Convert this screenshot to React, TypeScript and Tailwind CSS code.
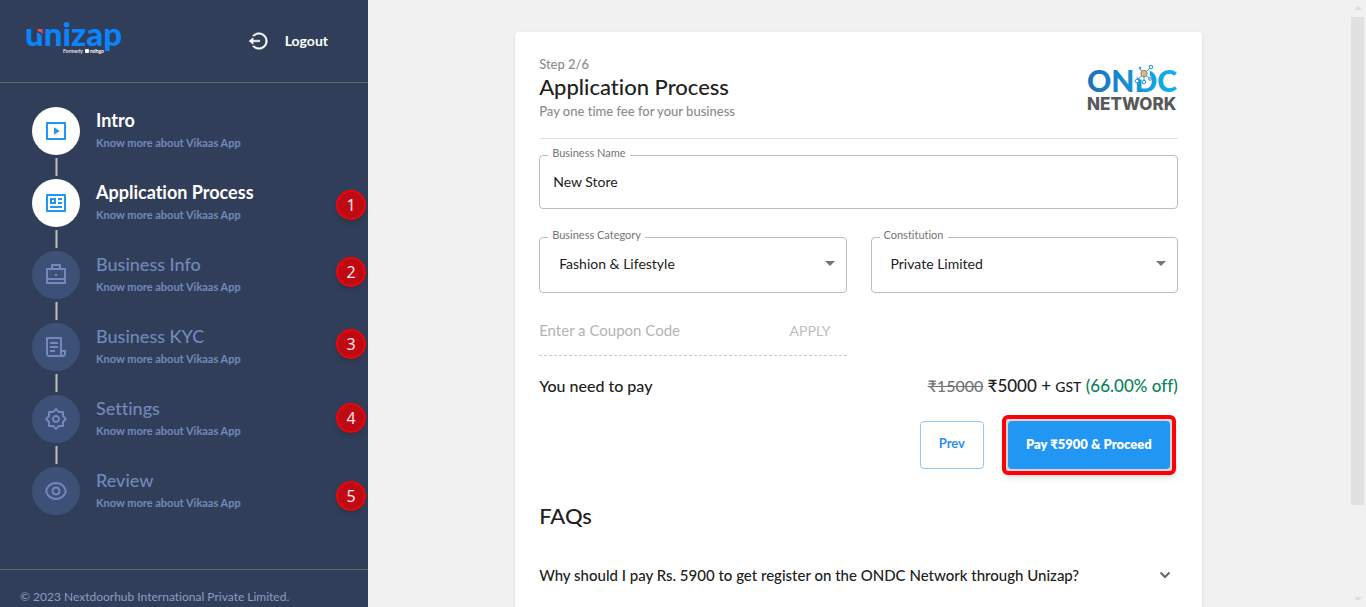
import { Fragment } from "react";
import type { ReactNode } from "react";
import {
  RiEyeLine,
  RiFileList3Line,
  RiLogoutCircleLine,
  RiProfileLine,
  RiSettings2Line,
} from "react-icons/ri";

type Step = { title: string; icon: ReactNode; state: "done" | "current" | "pending" };

const PlayIcon = () => (
  <svg viewBox="0 0 24 24" className="size-6" fill="currentColor" aria-hidden="true">
    <path d="M2 3h20v18H2V3Zm2 2v14h16V5H4Z" />
    <path d="M10 8.3v7.4l5.8-3.7L10 8.3Z" />
  </svg>
);

const BriefcaseIcon = () => (
  <svg viewBox="0 0 24 24" className="size-6" fill="currentColor" aria-hidden="true">
    <path d="M7 5V2a1 1 0 0 1 1-1h8a1 1 0 0 1 1 1v3h4a1 1 0 0 1 1 1v14a1 1 0 0 1-1 1H3a1 1 0 0 1-1-1V6a1 1 0 0 1 1-1h4Zm-3 12v2h16v-2H4Zm0-2h16V7H4v8ZM9 3v2h6V3H9Zm2 8h2v2h-2v-2Z" />
  </svg>
);

const steps: Step[] = [
  { title: "Intro", icon: <PlayIcon />, state: "done" },
  { title: "Application Process", icon: <RiProfileLine className="size-6" />, state: "current" },
  { title: "Business Info", icon: <BriefcaseIcon />, state: "pending" },
  { title: "Business KYC", icon: <RiFileList3Line className="size-6" />, state: "pending" },
  { title: "Settings", icon: <RiSettings2Line className="size-6" />, state: "pending" },
  { title: "Review", icon: <RiEyeLine className="size-6" />, state: "pending" },
];

const markers = [
  { n: 1, top: "top-[190px]" },
  { n: 2, top: "top-[257px]" },
  { n: 3, top: "top-[329px]" },
  { n: 4, top: "top-[403px]" },
  { n: 5, top: "top-[481px]" },
];

function UnizapLogo() {
  return (
    <svg viewBox="0 0 100 32" className="h-8 w-[100px] overflow-visible" role="img" aria-label="Unizap">
      <text x="1" y="21" fill="#0a84ff" fontFamily="Lato, sans-serif" fontWeight="900" fontSize="33">
        unizap
      </text>
      <path d="M12 3h8v3l-2 5-3-3-3-1Z" fill="#313e59" />
      <path d="M13.500 4h5v5.500l-2-2.500-3-1Z" fill="#e0525c" />
      <text x="39" y="28" fill="#e5e7eb" fontFamily="Lato, sans-serif" fontWeight="700" fontSize="5">
        Formerly
      </text>
      <rect x="61" y="24" width="4" height="4" rx="1" fill="#fff" />
      <text x="66" y="28" fill="#fff" fontFamily="Lato, sans-serif" fontWeight="700" fontSize="5">
        ndhgo
      </text>
    </svg>
  );
}

function OndcLogo() {
  return (
    <svg viewBox="0 0 92 48" className="h-12 w-[92px] overflow-visible" role="img" aria-label="ONDC Network">
      <defs>
        <linearGradient id="ondc" gradientUnits="userSpaceOnUse" x1="0" x2="92" y1="0" y2="0">
          <stop offset="0" stopColor="#1d70b8" />
          <stop offset="1" stopColor="#0db4f3" />
        </linearGradient>
      </defs>
      <text x="1" y="28" fill="url(#ondc)" fontFamily="Lato, sans-serif" fontWeight="900" fontSize="30">
        ONDC
      </text>
      <circle cx="57" cy="9" r="7" fill="#fff" />
      <g stroke="#2a93d5" strokeWidth="1" fill="#fff">
        <path d="M58 10l6-6M58 10l-7 6M58 10v7M58 10l5 4M58 10l-4-5" />
        <circle cx="65" cy="3" r="1.800" />
        <circle cx="51" cy="17" r="1.800" />
        <circle cx="58" cy="18" r="1.800" />
        <circle cx="64" cy="15" r="1.300" />
        <circle cx="54" cy="4" r="1" />
      </g>
      <circle cx="58" cy="9.500" r="3.200" fill="#d7b98c" stroke="#7b7468" strokeWidth="0.800" />
      <text x="1" y="46" fill="#58595b" fontFamily="Inter, sans-serif" fontWeight="800" fontSize="17">
        NETWORK
      </text>
    </svg>
  );
}

function SelectField({ id, label, value }: { id: string; label: string; value: string }) {
  return (
    <div className="relative">
      <label htmlFor={id} className="absolute -top-2 left-[9px] bg-white px-1 text-[11px] leading-3 text-[#757575]">
        {label}
      </label>
      <select
        id={id}
        className="block h-14 w-full appearance-none rounded border border-[#bdbdbd] bg-white px-[19px] pb-0.5 text-sm text-[#212121]"
      >
        <option>{value}</option>
      </select>
      <svg viewBox="0 0 10 5" className="pointer-events-none absolute top-6 right-3 h-[5px] w-2.5" aria-hidden="true">
        <path d="M0 0h10L5 5Z" fill="#757575" />
      </svg>
    </div>
  );
}

function Sidebar() {
  return (
    <aside className="relative flex w-[368px] shrink-0 flex-col bg-[#313e59]">
      <header className="flex h-[83px] items-center justify-between border-b border-[#666666] pr-10 pl-6">
        <UnizapLogo />
        <button className="flex items-center gap-4 text-sm font-bold text-white">
          <RiLogoutCircleLine className="size-5" stroke="currentColor" strokeWidth="0.5" />
          Logout
        </button>
      </header>
      <nav className="px-8 pt-6">
        <ol>
          {steps.map((s, i) => (
            <Fragment key={s.title}>
              {i > 0 && (
                <li aria-hidden="true" className="my-[3px] ml-[23px] h-[18px] w-[3px] border-x border-[#7a828f] bg-[#bdbdbd]" />
              )}
              <li className="flex h-12 gap-4">
                <span
                  className={
                    s.state === "pending"
                      ? "flex size-12 shrink-0 items-center justify-center rounded-full bg-[#3d5178] text-[#7289bb]"
                      : "flex size-12 shrink-0 items-center justify-center rounded-full bg-white text-[#2196f3]"
                  }
                >
                  {s.icon}
                </span>
                <a href="#step" className="block">
                  <span
                    className={
                      s.state === "pending"
                        ? "block text-lg leading-[26px] font-medium text-[#7289bb]"
                        : "block text-lg leading-[26px] font-bold text-white"
                    }
                  >
                    {s.title}
                  </span>
                  <span className="block text-[11px] leading-5 font-bold text-[#7289bb]">Know more about Vikaas App</span>
                </a>
              </li>
            </Fragment>
          ))}
        </ol>
      </nav>
      <footer className="mt-auto h-[38px] border-t border-[#666666] px-5 pt-[18px] text-xs leading-[18px] whitespace-nowrap text-[#8b9dc5]">
        © 2023 Nextdoorhub International Private Limited.
      </footer>
      {markers.map((m) => (
        <span
          key={m.n}
          className={`${m.top} absolute right-[2px] flex size-[30px] items-center justify-center rounded-full border-2 border-[#ee0508] bg-[#bd0a14] font-['Noto_Sans'] text-base text-[#ffe4e4] shadow-md`}
        >
          {m.n}
        </span>
      ))}
    </aside>
  );
}

function Scrollbar() {
  return (
    <div aria-hidden="true" className="flex w-[17px] shrink-0 flex-col items-center gap-1 bg-[#f1f1f1] py-1.5">
      <svg viewBox="0 0 8 4" className="h-1 w-2 shrink-0">
        <path d="M0 4h8L4 0Z" fill="#dcdcdc" />
      </svg>
      <div className="mt-[3px] h-[82%] w-[13px] bg-[#e1e1e1]" />
      <svg viewBox="0 0 8 4" className="mt-auto h-1 w-2 shrink-0">
        <path d="M0 0h8L4 4Z" fill="#dcdcdc" />
      </svg>
    </div>
  );
}

export default function App() {
  return (
    <div className="flex h-screen overflow-hidden bg-[#f1f1f1] font-[Lato,sans-serif] text-[#212121] [font-variant-ligatures:none]">
      <Sidebar />
      <main className="min-w-0 flex-1 overflow-hidden pt-8">
        <section className="mx-auto min-h-full w-[70%] rounded bg-white p-6 shadow">
          <header className="flex justify-between border-b border-[#e0e0e0] pb-[18px]">
            <div>
              <p className="text-[13px] leading-4 font-medium text-[#8c8c8c]">Step 2/6</p>
              <h1 className="text-[22px] leading-[30px] font-medium">Application Process</h1>
              <p className="text-[13px] leading-[18px] font-medium text-[#8c8c8c]">Pay one time fee for your business</p>
            </div>
            <div className="pt-2">
              <OndcLogo />
            </div>
          </header>
          <form onSubmit={(e) => e.preventDefault()}>
            <div className="relative mt-4">
              <label htmlFor="name" className="absolute -top-2 left-[9px] bg-white px-1 text-[11px] leading-3 text-[#757575]">
                Business Name
              </label>
              <input
                id="name"
                defaultValue="New Store"
                className="block h-[54px] w-full rounded border border-[#bdbdbd] px-[13px] pb-0.5 text-sm text-[#212121]"
              />
            </div>
            <div className="mt-7 grid grid-cols-2 gap-6">
              <SelectField id="category" label="Business Category" value="Fashion & Lifestyle" />
              <SelectField id="constitution" label="Constitution" value="Private Limited" />
            </div>
            <div className="mt-[14px] grid grid-cols-2 gap-6">
              <div className="flex h-[49px] items-center justify-between border-b border-dashed border-[#cccccc] pr-4 text-sm text-[#bdbdbd]">
                <input
                  aria-label="Coupon code"
                  placeholder="Enter a Coupon Code"
                  className="min-w-0 flex-1 text-[15px] placeholder:text-[#b3b3b3]"
                />
                <button type="button">APPLY</button>
              </div>
            </div>
            <div className="mt-[18px] flex h-6 items-center justify-between">
              <p className="text-base font-medium">You need to pay</p>
              <p className="text-[17px] font-medium">
                <s className="text-base text-[#757575]">₹15000</s> ₹5000 + <span className="text-sm">GST</span>{" "}
                <span className="text-[#0b8457]">(66.00% off)</span>
              </p>
            </div>
            <div className="mt-[17px] flex justify-end gap-[18px] pr-0.5">
              <button type="button" className="my-1.5 h-12 w-16 rounded border border-[#90caf9] pb-0.5 text-[13px] font-bold text-[#2f8eea]">
                Prev
              </button>
              <div className="rounded-md border-4 border-[#fb0007] bg-[#d5d5d5] p-0.5 shadow-md">
                <button type="submit" className="block h-12 w-[162px] rounded bg-[#2196f3] text-[13px] font-extrabold text-white">
                  Pay ₹5900 &amp; Proceed
                </button>
              </div>
            </div>
          </form>
          <h2 className="mt-[25px] text-[22px] leading-8 font-medium">FAQs</h2>
          <button className="mt-[31px] flex w-full items-center justify-between pr-[7px] text-left text-[15px] leading-6 font-medium">
            Why should I pay Rs. 5900 to get register on the ONDC Network through Unizap?
            <svg viewBox="0 0 12 8" className="h-2 w-3" fill="none" stroke="#666666" strokeWidth="2" aria-hidden="true">
              <path d="m1.500 1.500 4.500 4.500 4.500-4.500" />
            </svg>
          </button>
        </section>
      </main>
      <Scrollbar />
    </div>
  );
}
